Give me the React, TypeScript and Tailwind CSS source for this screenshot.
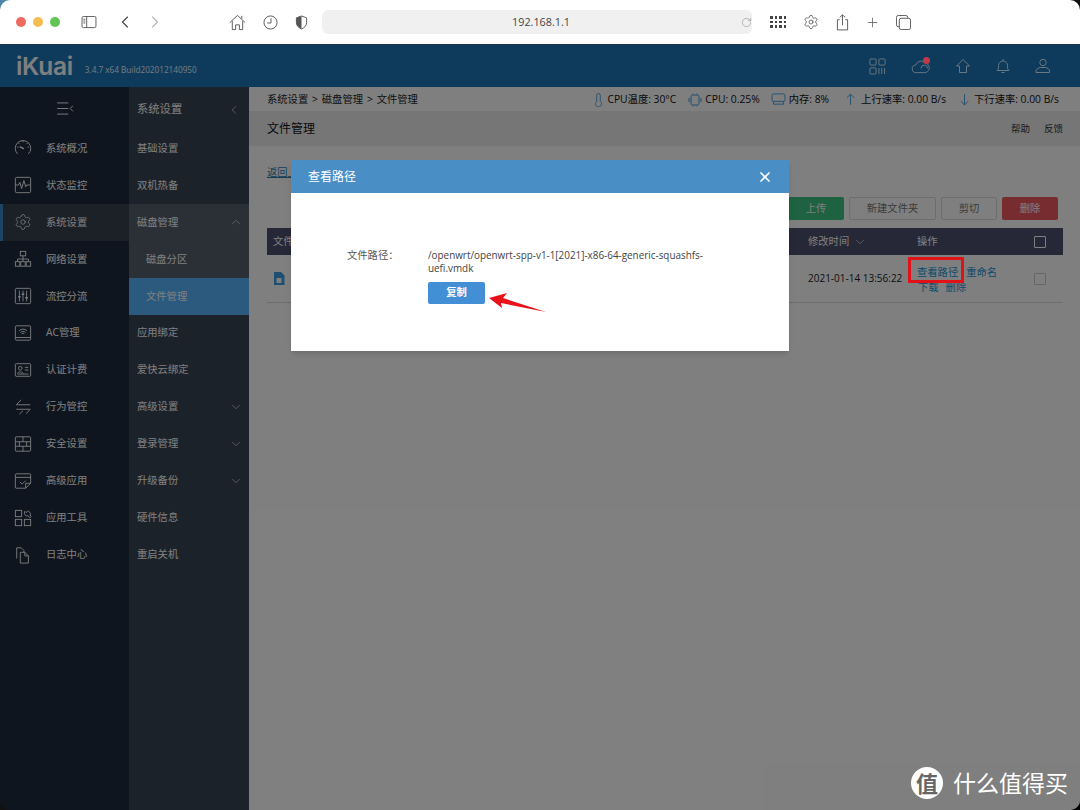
import React from 'react';
import { ChevronLeft, ChevronRight, ChevronDown, ChevronUp, X, Settings, RotateCw, Plus } from 'lucide-react';

const cn = { font: 'font-["Open_Sans","Noto_Sans_CJK_SC",sans-serif]' };

type IconProps = { className?: string };

const Svg: React.FC<React.PropsWithChildren<IconProps & { box?: number }>> = ({ className, box = 20, children }) => (
  <svg viewBox={`0 0 ${box} ${box}`} fill="none" stroke="currentColor" strokeWidth={1} className={className}>
    {children}
  </svg>
);

const menuIcons: Record<string, React.ReactNode> = {
  gauge: (
    <>
      <path d="M4 16.500A8.600 8.600 0 1 1 16 16.500" />
      <path d="M3.500 9h1.500M16.500 9H15M10 2v1.500M5.200 4.600l1 1M14.800 4.600l-1 1" />
      <path d="M6.500 8.500l4.500 2.500" strokeWidth={1.600} />
    </>
  ),
  monitor: (
    <>
      <rect x="1.500" y="1.500" width="17" height="17" rx="1.500" />
      <path d="M1.500 10h3.500l1.500-3 2 7 2.500-9 2 7 1-2h4" />
    </>
  ),
  network: (
    <>
      <rect x="7" y="1.500" width="6" height="5" />
      <rect x="1.500" y="13" width="5" height="5" />
      <rect x="7.500" y="13" width="5" height="5" />
      <rect x="13.500" y="13" width="5" height="5" />
      <path d="M10 6.500V13M4 13v-3h12v3" />
    </>
  ),
  sliders: (
    <>
      <rect x="1.500" y="1.500" width="17" height="17" rx="1.500" />
      <path d="M6 4v12M10 4v12M14 4v12" />
      <path d="M4.500 11h3M8.500 8h3M12.500 12h3" strokeWidth={1.600} />
    </>
  ),
  ac: (
    <>
      <rect x="1.500" y="2" width="17" height="16" rx="1.500" />
      <path d="M1.500 15h17" />
      <path d="M5.500 7.500a6.500 6.500 0 0 1 9 0M7 9.500a4 4 0 0 1 6 0M8.500 11a2 2 0 0 1 3 0" />
    </>
  ),
  card: (
    <>
      <rect x="1.500" y="3" width="17" height="14" rx="1" />
      <circle cx="7" cy="8" r="2" />
      <path d="M3.800 14c.4-2.500 6-2.500 6.400 0M12 7h4M12 10h4M4 14.500h12" />
    </>
  ),
  arrows: (
    <>
      <path d="M18 7.500H2.500L8 2M2.500 12.500H18L13.500 17.500" />
      <path d="M6 18l4-4" />
    </>
  ),
  wall: (
    <>
      <rect x="1.500" y="2" width="17" height="16" rx="1" />
      <path d="M1.500 7.500h17M1.500 12.500h17M10 2v5.500M6 7.500v5M14 7.500v5M10 12.500V18" />
    </>
  ),
  task: (
    <>
      <path d="M18.500 12.500V3a1 1 0 0 0-1-1h-15a1 1 0 0 0-1 1v14a1 1 0 0 0 1 1H13z" />
      <path d="M1.500 6h17M6.500 11l2.500 2.500 4-4M13 18v-5.500h5.500" />
    </>
  ),
  apps: (
    <>
      <rect x="1.500" y="1.500" width="7" height="7" />
      <rect x="1.500" y="11.500" width="7" height="7" />
      <rect x="11.500" y="11.500" width="7" height="7" />
      <path d="M12 2.500l1.500 1.500 1.500-1.500a3 3 0 0 1 3 4l1 2-1.500 1-2-2a3 3 0 0 1-3.500-4.500z" />
    </>
  ),
  files: (
    <>
      <path d="M3 14V2h5l3 3v2" />
      <path d="M7 7h5l4 4v8H7zM12 7v4h4" />
    </>
  ),
};

const mainMenu = [
  { label: '系统概况', icon: 'gauge' },
  { label: '状态监控', icon: 'monitor' },
  { label: '系统设置', icon: 'gear', active: true },
  { label: '网络设置', icon: 'network' },
  { label: '流控分流', icon: 'sliders' },
  { label: 'AC管理', icon: 'ac' },
  { label: '认证计费', icon: 'card' },
  { label: '行为管控', icon: 'arrows' },
  { label: '安全设置', icon: 'wall' },
  { label: '高级应用', icon: 'task' },
  { label: '应用工具', icon: 'apps' },
  { label: '日志中心', icon: 'files' },
];

const subMenu = [
  { label: '基础设置' },
  { label: '双机热备' },
  { label: '磁盘管理', open: true },
  { label: '磁盘分区', child: true },
  { label: '文件管理', child: true, current: true },
  { label: '应用绑定' },
  { label: '爱快云绑定' },
  { label: '高级设置', more: true },
  { label: '登录管理', more: true },
  { label: '升级备份', more: true },
  { label: '硬件信息' },
  { label: '重启关机' },
];

const BrowserBar = () => (
  <div className="flex h-[44px] shrink-0 items-center bg-white text-[#555]">
    <div className="ml-4 flex gap-[7px]">
      <span className="h-[10px] w-[10px] rounded-full bg-[#ee6a5f]" />
      <span className="h-[10px] w-[10px] rounded-full bg-[#f5bd4f]" />
      <span className="h-[10px] w-[10px] rounded-full bg-[#61c454]" />
    </div>
    <svg viewBox="0 0 16 14" fill="none" stroke="currentColor" className="ml-[21px] h-[13px] w-[16px]">
      <rect x="0.500" y="0.500" width="15" height="12" rx="1.500" />
      <path d="M5.500 .5v12M2 3.500h2M2 5.500h2M2 7.500h2" />
    </svg>
    <ChevronLeft size={20} strokeWidth={1.300} className="ml-[18px] text-[#444]" />
    <ChevronRight size={20} strokeWidth={1.300} className="ml-[10px] text-[#b5b5b5]" />
    <svg viewBox="0 0 18 18" fill="none" stroke="currentColor" className="ml-[64px] h-[17px] w-[17px]">
      <path d="M1 9l8-7.500L17 9M3.500 7.500V16.500h3.500v-5h4v5h3.500V7.500M13.500 2v3" />
    </svg>
    <svg viewBox="0 0 16 16" fill="none" stroke="currentColor" className="ml-[17px] h-[15px] w-[15px]">
      <circle cx="8" cy="8" r="7" />
      <path d="M8.500 3.500V8.500H4.500" />
    </svg>
    <svg viewBox="0 0 14 16" className="ml-[17px] h-[15px] w-[13px]">
      <path d="M7 1L1.500 3v5c0 3.500 2.500 5.500 5.500 7 3-1.500 5.500-3.500 5.500-7V3z" fill="none" stroke="currentColor" />
      <path d="M7 1L1.500 3v5c0 3.500 2.500 5.500 5.500 7z" fill="currentColor" />
    </svg>
    <div className="relative ml-[14px] flex h-[24px] w-[430px] items-center justify-center rounded-md bg-[#f0f0f0] pl-[8px] text-[10.800px] text-[#444]">
      192.168.1.1
      <RotateCw size={11} strokeWidth={1} className="absolute right-0 text-[#777]" />
    </div>
    <div className="ml-[18px] grid grid-cols-4 gap-x-[2px] gap-y-[2px]">
      {Array.from({ length: 12 }).map((_, i) => (
        <span key={i} className="h-[2.500px] w-[2.500px] bg-[#444]" />
      ))}
    </div>
    <Settings size={16} strokeWidth={1.200} className="ml-[17px]" />
    <svg viewBox="0 0 14 18" fill="none" stroke="currentColor" className="ml-[17px] h-[17px] w-[13px]">
      <path d="M4 6H1.500v11h11V6H10M7 12V1M4 3.500L7 .8l3 2.700" />
    </svg>
    <Plus size={15} strokeWidth={1.200} className="ml-[16px]" />
    <svg viewBox="0 0 16 16" fill="none" stroke="currentColor" className="ml-[16px] h-[15px] w-[15px]">
      <rect x="3.500" y="3.500" width="12" height="12" rx="2" />
      <path d="M12.500 3.500V2.500a2 2 0 0 0-2-2h-8a2 2 0 0 0-2 2v8a2 2 0 0 0 2 2h1" />
    </svg>
  </div>
);

const AppHeader = () => (
  <div className="flex h-[43px] shrink-0 items-center border-t border-[#2c6f9c] bg-[#1c76b8] text-[#d4f0ff]">
    <span className="ml-4 font-['Inter'] text-[24.500px] leading-none font-semibold tracking-[-0.3px] text-[#fff]">iKuai</span>
    <span className="mt-[9px] ml-[12px] text-[8.200px] text-[#e8f4ff]">3.4.7 x64 Build202012140950</span>
    <div className="ml-auto flex items-center gap-[24px] pr-[29px]">
      <svg viewBox="0 0 18 18" fill="none" stroke="currentColor" className="mr-[1px] h-[17px] w-[17px]">
        <rect x="1" y="1" width="6.500" height="6.500" rx="1" />
        <rect x="10.500" y="1" width="6.500" height="6.500" rx="1" />
        <rect x="1" y="10.500" width="6.500" height="6.500" rx="1" />
        <path d="M10.500 10.500v6.500M13.500 10.500v6.500M16.500 10.500v6.500" />
      </svg>
      <svg viewBox="0 0 20 18" fill="none" stroke="currentColor" className="h-[17px] w-[20px]">
        <path d="M5 15.500a4 4 0 0 1-.5-8A6 6 0 0 1 15 5.500a5 5 0 0 1 3.500 6.500c-.6 2-2.500 3.500-4.500 3.500z" />
        <path d="M10 11a3.500 3.500 0 0 1 7 0" />
      </svg>
      <svg viewBox="0 0 16 16" fill="none" stroke="currentColor" className="h-[16px] w-[16px]">
        <path d="M8 1.500L1.500 8H4.500V14.500H11.500V8H14.500z" />
      </svg>
      <svg viewBox="0 0 16 16" fill="none" stroke="currentColor" className="h-[16px] w-[16px]">
        <path d="M2 12.500c1.500-1 1.500-3 1.500-5a4.500 4.500 0 0 1 9 0c0 2 0 4 1.500 5zM6.500 14.500h3M8 1v2" />
      </svg>
      <svg viewBox="0 0 16 16" fill="none" stroke="currentColor" className="h-[16px] w-[16px]">
        <ellipse cx="8" cy="4.500" rx="3.200" ry="3.200" />
        <path d="M1 14.500V13c0-2 3-3.500 4.500-3.500h5c1.500 0 4 1.500 4 3.500v1.500z" />
      </svg>
    </div>
  </div>
);

const MainMenu = () => (
  <div className="flex w-[129px] shrink-0 flex-col bg-[#1e2a3c] text-white">
    <div className="flex h-[43px] items-center justify-center">
      <svg viewBox="0 0 20 14" fill="none" stroke="currentColor" className="ml-[1px] h-[13px] w-[19px]">
        <path d="M1 1h12M1 7h12M1 13h12M18 4l-3 3 3 3" />
      </svg>
    </div>
    {mainMenu.map(item => (
      <div
        key={item.label}
        className={`flex h-[36.950px] items-center gap-[14px] border-l-[3px] pl-[11px] text-[10.300px] ${item.active ? 'border-[#3b88c6] bg-[#38404e]' : 'border-transparent'}`}
      >
        {item.icon === 'gear' ? (
          <Settings size={18} strokeWidth={1} />
        ) : (
          <Svg className="h-[18px] w-[18px] shrink-0">{menuIcons[item.icon]}</Svg>
        )}
        <span>{item.label}</span>
      </div>
    ))}
  </div>
);

const SubMenu = () => (
  <div className="flex w-[120px] shrink-0 flex-col bg-[#384454] text-white">
    <div className="flex h-[43px] items-center justify-between pt-[2px] pr-[8px] pl-[8px] text-[11.300px]">
      系统设置
      <ChevronLeft size={14} strokeWidth={1} />
    </div>
    {subMenu.map(item => (
      <div
        key={item.label}
        className={`flex h-[36.950px] items-center justify-between pr-[6px] text-[10.300px] ${item.child ? 'pl-[17px]' : 'pl-[8px]'} ${item.current ? 'bg-[#56b4fc]' : item.open || item.child ? 'bg-[#56606e]' : ''}`}
      >
        {item.label}
        {item.open && <ChevronUp size={14} strokeWidth={1} />}
        {item.more && <ChevronDown size={14} strokeWidth={1} />}
      </div>
    ))}
  </div>
);

const StatusBar = () => (
  <div className="flex h-[24px] shrink-0 items-center justify-between bg-white pt-[1px] pr-[21px] pl-[18px] text-[10.300px] text-[#222]">
    <span className="[word-spacing:1.200px]">系统设置 &gt; 磁盘管理 &gt; 文件管理</span>
    <div className="flex items-center text-[#111]">
      <svg viewBox="0 0 10 16" fill="none" stroke="#3c9ce0" className="h-[14px] w-[9px]">
        <path d="M3 9.500V2.500a2 2 0 0 1 4 0v7a3.500 3.500 0 1 1-4 0z" />
      </svg>
      <span className="ml-[4px]">CPU温度: 30°C</span>
      <svg viewBox="0 0 14 14" fill="none" stroke="#3c9ce0" className="ml-[12px] h-[14px] w-[14px]">
        <rect x="3" y="2" width="8" height="10" rx="1.500" />
        <path d="M1 5v4M13 5v4M5 .5v1M9 .5v1M5 12.500v1M9 12.500v1" />
      </svg>
      <span className="ml-[3px]">CPU: 0.25%</span>
      <svg viewBox="0 0 16 14" fill="none" stroke="#3c9ce0" className="ml-[11px] h-[13px] w-[15px]">
        <rect x="1" y="1" width="14" height="8" rx="1.500" />
        <path d="M2.500 9v3h11V9" />
      </svg>
      <span className="ml-[3px]">内存: 8%</span>
      <svg viewBox="0 0 10 14" fill="none" stroke="#3c9ce0" className="ml-[17px] h-[13px] w-[9px]">
        <path d="M5 13V1M1 5l4-4 4 4" />
      </svg>
      <span className="ml-[6px]">上行速率: 0.00 B/s</span>
      <svg viewBox="0 0 10 14" fill="none" stroke="#3c9ce0" className="ml-[14px] h-[13px] w-[9px]">
        <path d="M5 1v12M1 9l4 4 4-4" />
      </svg>
      <span className="ml-[5px]">下行速率: 0.00 B/s</span>
    </div>
  </div>
);

const FilePage = () => (
  <div className="flex min-w-0 flex-1 flex-col bg-white">
    <StatusBar />
    <div className="flex h-[35px] shrink-0 items-center justify-between bg-[#ececec] pt-[1px] pr-[17px] pl-[18px]">
      <span className="text-[12px] text-[#111]">文件管理</span>
      <span className="flex gap-[14px] text-[9.500px] text-[#333]">
        <span>帮助</span>
        <span>反馈</span>
      </span>
    </div>
    <div className="flex flex-col pr-[17px] pl-[18px]">
      <a className="mt-[19px] text-[10.300px] leading-[14px] text-[#2c7fb0] underline">返回上一级</a>
      <div className="mt-[18px] flex justify-end gap-[5px] pr-[5px] text-[10.300px]">
        <button className="h-[23px] w-[70px] rounded-[2px] bg-[#3fc483] pl-[14px] text-white">上传</button>
        <button className="h-[23px] w-[87px] rounded-[2px] border border-[#ddd] text-[#777]">新建文件夹</button>
        <button className="h-[23px] w-[56px] rounded-[2px] border border-[#ddd] text-[#777]">剪切</button>
        <button className="h-[23px] w-[56px] rounded-[2px] bg-[#ee5b60] text-white">删除</button>
      </div>
      <div className="mt-[8px] grid h-[27px] grid-cols-[535px_109px_117px_1fr] items-center bg-[#4c5070] pl-[6px] text-[10.300px] text-white">
        <span>文件名</span>
        <span className="flex items-center gap-[4px]">
          修改时间
          <ChevronDown size={14} strokeWidth={1} />
        </span>
        <span>操作</span>
        <span className="h-[12px] w-[12px] rounded-[1px] border border-white" />
      </div>
      <div className="grid h-[48px] grid-cols-[535px_109px_117px_1fr] items-center border-b border-[#ddd] pl-[6px] text-[10.300px]">
        <svg viewBox="0 0 12 13" className="h-[13px] w-[12px] text-[#3c9ce0]">
          <path d="M1 0h7l3.500 3.500V13H1z" fill="currentColor" />
          <path d="M3.500 6h5v5h-5z" fill="white" />
        </svg>
        <span className="text-[10px] text-[#222]">2021-01-14 13:56:22</span>
        <div className="flex flex-col gap-[3px] pt-[2px] text-[#2196d8]">
          <span className="flex gap-[8px] leading-[12px]">
            <span>查看路径</span>
            <span>重命名</span>
          </span>
          <span className="flex gap-[7px] pl-[1px] leading-[12px]">
            <span>下载</span>
            <span>删除</span>
          </span>
        </div>
        <span className="h-[12px] w-[12px] rounded-[1px] border border-[#ccc]" />
      </div>
    </div>
  </div>
);

const PathDialog = () => (
  <div className="absolute top-[116px] left-[291px] z-20 flex h-[191px] w-[498px] flex-col bg-white shadow-md">
    <div className="flex h-[33px] shrink-0 items-center justify-between bg-[#4a8ec6] pr-[16px] pl-[17px] text-white">
      <span className="text-[12px]">查看路径</span>
      <X size={16} strokeWidth={2.500} />
    </div>
    <div className="flex pt-[56px] pl-[56px] text-[10.300px] text-[#555]">
      <span className="w-[81px] shrink-0 leading-[13px]">文件路径：</span>
      <div className="flex w-[280px] flex-col items-start text-[#444]">
        <p className="text-[9.900px] leading-[13px]">/openwrt/openwrt-spp-v1-1[2021]-x86-64-generic-squashfs-uefi.vmdk</p>
        <button className="mt-[7px] h-[22px] w-[57px] rounded-[2px] bg-[#428fd6] text-[10.300px] font-semibold text-white">复制</button>
      </div>
    </div>
    {/* annotation arrow on the screenshot */}
    <svg viewBox="0 0 60 26" className="absolute top-[127px] left-[197px] h-[26px] w-[60px]">
      <path d="M1 11L19 6L15 11L58 25L13 16L14 21z" fill="#e8121a" />
    </svg>
  </div>
);

export default function App() {
  return (
    <div className={`h-[810px] w-[1080px] overflow-hidden bg-linear-to-br from-[#4a86a8] via-[#111] to-black ${cn.font}`}>
      <div className="flex h-full flex-col overflow-hidden rounded-[10px]">
        <BrowserBar />
        <div className="relative flex min-h-0 flex-1 flex-col">
          <AppHeader />
          <div className="flex min-h-0 flex-1">
            <MainMenu />
            <SubMenu />
            <FilePage />
          </div>
          <div className="absolute inset-0 z-10 bg-black/50" />
          <span className="absolute top-[13px] left-[923px] z-20 h-[7px] w-[7px] rounded-full bg-[#c0394b]" />
          <PathDialog />
          {/* red annotation box around 查看路径 */}
          <div className="absolute top-[213px] left-[908px] z-20 h-[26px] w-[56px] border-[3px] border-[#e01218]" />
          <div className="absolute top-[723px] left-[911px] z-20 flex items-center gap-[10px] text-[23px] leading-none text-white">
            <span className="flex h-[32px] w-[32px] items-center justify-center rounded-full bg-white text-[22px] font-bold text-[#666]">值</span>
            <span>什么值得买</span>
          </div>
        </div>
      </div>
    </div>
  );
}
